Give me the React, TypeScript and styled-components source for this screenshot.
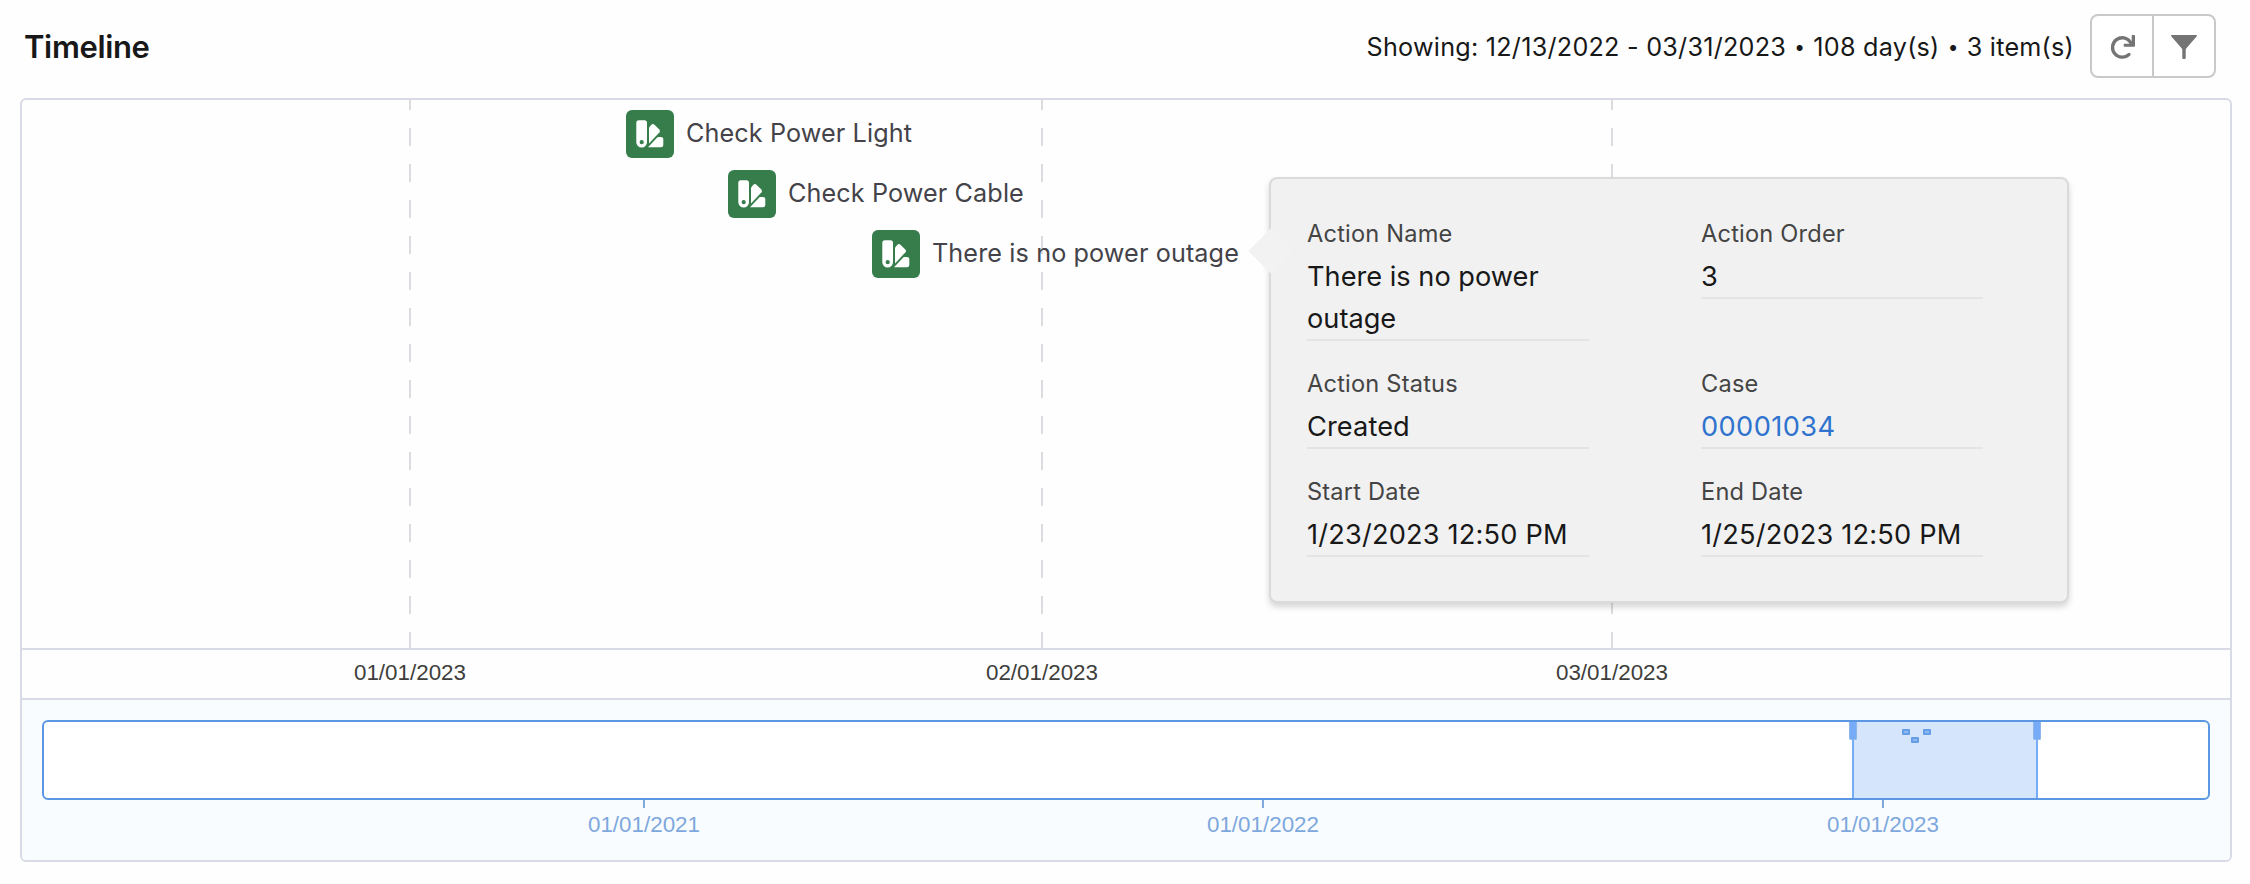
import React from "react";
import styled, { createGlobalStyle } from "styled-components";

const GlobalStyle = createGlobalStyle`
  * { box-sizing: border-box; }
  body {
    margin: 0;
    background: #fff;
    color: #181818;
    font-family: Inter, "Liberation Sans", sans-serif;
  }
`;

const Page = styled.main`
  height: 884px;
  padding: 0 18px 0 20px;
  background: #fefefe;
  overflow: hidden;
`;

const Header = styled.header`
  display: flex;
  align-items: flex-start;
  height: 98px;
  padding: 14px 16px 0 4px;
`;

const Title = styled.h1`
  margin: 0;
  flex: 1;
  font-size: 31px;
  font-weight: 600;
  line-height: 66px;
  letter-spacing: -0.35px;
`;

const Summary = styled.p`
  margin: 0 16px 0 0;
  font-size: 25.2px;
  line-height: 66px;
  letter-spacing: 0.24px;
  white-space: nowrap;
`;

const Dot = styled.span`
  display: inline-block;
  width: 12.5px;
  font-size: 19px;
  line-height: 1;
  text-align: center;
  vertical-align: 2px;
`;

const ButtonGroup = styled.div`
  display: flex;
  width: 126px;
  height: 64px;
  border: 2px solid #c9c9c9;
  border-radius: 8px;
  background: #fff;
`;

const IconButton = styled.button`
  display: flex;
  flex: 1;
  align-items: center;
  justify-content: center;
  padding: 0;
  border: 0;
  background: none;
  color: #747474;

  & + & { border-left: 2px solid #c9c9c9; }
`;

const Panel = styled.section`
  position: relative;
  height: 764px;
  border: 2px solid #d8dbe5;
  border-radius: 6px;
  background: #fefefe;
`;

const Chart = styled.div`
  position: relative;
  height: 548px;
  padding-top: 10px;
`;

const GridLine = styled.i<{ $x: number }>`
  position: absolute;
  top: 0;
  bottom: 0;
  left: ${(p) => p.$x}px;
  width: 2px;
  background: repeating-linear-gradient(
    to bottom, #dddbe0 0 18px, transparent 18px 36px
  ) 0 -8px / 2px 576px no-repeat;
`;

const Item = styled.div<{ $x: number }>`
  position: relative;
  display: flex;
  gap: 12px;
  height: 48px;
  margin: 0 0 12px ${(p) => p.$x}px;
`;

const ItemIcon = styled.span`
  width: 48px;
  height: 48px;
  border-radius: 6px;
  background: #377d4b;
`;

const ItemLabel = styled.span`
  font-size: 25.2px;
  line-height: 47px;
  letter-spacing: 0.11px;
  color: #444349;
`;

const Axis = styled.div`
  position: relative;
  height: 52px;
  border: solid #d8dbe5;
  border-width: 2px 0;
`;

const AxisLabel = styled.span<{ $x: number }>`
  position: absolute;
  left: ${(p) => p.$x}px;
  transform: translateX(-50%);
  font: 22.4px/46px "Liberation Sans", Arial, sans-serif;
  color: #3e3e3c;
`;

const Overview = styled.div`
  height: 160px;
  padding: 20px 20px 0;
  border-radius: 0 0 4px 4px;
  background: #f8fcff;
`;

const Track = styled.div`
  position: relative;
  height: 80px;
  border: 2px solid #5c97e3;
  border-radius: 6px;
  background: #fff;
`;

const Brush = styled.div`
  position: absolute;
  top: 0;
  bottom: 0;
  left: 1808px;
  width: 186px;
  border: solid #75abf7;
  border-width: 0 2px;
  background: #d5e5fc;
`;

const Handle = styled.i<{ $x: number }>`
  position: absolute;
  top: 0;
  left: ${(p) => p.$x}px;
  width: 8px;
  height: 18px;
  border: solid #8fb6ea;
  border-width: 0 1px 1px;
  border-radius: 0 0 2px 2px;
  background: #75abf7;
`;

const Mark = styled.i<{ $x: number; $y: number }>`
  position: absolute;
  left: ${(p) => p.$x}px;
  top: ${(p) => p.$y}px;
  width: 8px;
  height: 6px;
  border: 2px solid #659ee7;
  border-radius: 1px;
  background: #8fbaf0;
`;

const YearScale = styled.div`
  position: relative;
`;

const YearTick = styled.div<{ $x: number }>`
  position: absolute;
  left: ${(p) => p.$x}px;
  display: flex;
  flex-direction: column;
  align-items: center;
  gap: 4px;
  transform: translateX(-50%);
  font: 22.4px/26px "Liberation Sans", Arial, sans-serif;
  color: #7ea8dd;

  &::before {
    content: "";
    width: 2px;
    height: 8px;
    background: #7ea8dd;
  }
`;

const Popover = styled.aside`
  position: absolute;
  left: 1247px;
  top: 77px;
  display: grid;
  grid-template-columns: 282px 282px;
  align-content: start;
  gap: 24px 112px;
  width: 800px;
  height: 426px;
  padding: 36px 0 0 36px;
  border: 2px solid #dadada;
  border-radius: 8px;
  background: #f1f1f1;
  box-shadow: 0 4px 6px rgba(0, 0, 0, 0.16);

  &::before {
    content: "";
    position: absolute;
    left: -16px;
    top: 56px;
    width: 32px;
    height: 32px;
    background: #f2f2f2;
    transform: rotate(45deg);
  }
`;

const Field = styled.div`
  position: relative;
  display: flex;
  flex-direction: column;
  align-self: start;
  gap: 4px;
  padding-top: 1px;
  border-bottom: 2px solid #e4e4e4;
`;

const FieldLabel = styled.span`
  font-size: 23.6px;
  line-height: 36px;
  letter-spacing: 0.2px;
  color: #444;
`;

const FieldValue = styled.span<{ $spacing?: number; $link?: boolean }>`
  margin-bottom: -1px;
  font-size: 27.2px;
  line-height: 42px;
  letter-spacing: ${(p) => p.$spacing ?? 0}px;
  color: ${(p) => (p.$link ? "#2f73cf" : "#181818")};
`;

const RefreshIcon = () => (
  <svg width="28" height="28" viewBox="0 0 28 28" fill="none">
    <path d="M21 22.4A9.7 9.7 0 1 1 22.4 10.2L24 12.6" stroke="currentColor" strokeWidth="3.3" strokeLinecap="round" />
    <path d="M24.5 3h1.7q.8 0 .8.8v10q0 .9-.9.9H16.5q-.8 0-.8-.8v-1.3q0-.8.8-.8h5l2.2-2V3.8q0-.8.8-.8z" fill="currentColor" />
  </svg>
);

const FilterIcon = () => (
  <svg width="28" height="28" viewBox="0 0 28 28" fill="currentColor">
    <path d="M1.6 3h24.8q1 .4.4 1.3L16.4 16.2q-.7.8-.7 1.8v8.1q0 .9-.9.9h-1.6q-.9 0-.9-.9V18q0-1-.7-1.8L1.2 4.3q-.6-.9.4-1.3z" />
  </svg>
);

const SwatchIcon = () => (
  <svg width="48" height="48" viewBox="0 0 48 48" fill="#fff">
    <path fillRule="evenodd" d="M12.8 10.3h5.7a2.5 2.5 0 0 1 2.5 2.5v19.4a5.35 5.35 0 0 1-10.7 0V12.8a2.5 2.5 0 0 1 2.5-2.5zm2.9 19.8a2.1 2.1 0 1 0 0 4.2a2.1 2.1 0 0 0 0-4.2z" />
    <path d="M23 18.6q0-.8.5-1.5l1.9-2.4q1.4-1.4 2.8-.1l5.1 4.8q1.3 1.5.2 2.8L23 33.4z" />
    <path d="M30.3 28.5q1-1.4 2.6-1.4h1.8q2.6 0 2.6 2.4v5.4q0 2.4-2.4 2.4H22z" />
  </svg>
);

const months = [
  { x: 387, label: "01/01/2023" },
  { x: 1019, label: "02/01/2023" },
  { x: 1589, label: "03/01/2023" },
];

const items = [
  { x: 604, name: "Check Power Light" },
  { x: 706, name: "Check Power Cable" },
  { x: 850, name: "There is no power outage" },
];

const years = [
  { x: 602, label: "01/01/2021" },
  { x: 1221, label: "01/01/2022" },
  { x: 1841, label: "01/01/2023" },
];

const fields = [
  { label: "Action Name", value: "There is no power outage" },
  { label: "Action Order", value: "3" },
  { label: "Action Status", value: "Created", spacing: 0.1 },
  { label: "Case", value: "00001034", spacing: 0.4, link: true },
  { label: "Start Date", value: "1/23/2023 12:50 PM", spacing: 0.18 },
  { label: "End Date", value: "1/25/2023 12:50 PM", spacing: 0.18 },
];

export default function App() {
  return (
    <Page>
      <GlobalStyle />
      <Header>
        <Title>Timeline</Title>
        <Summary>
          Showing: 12/13/2022 - 03/31/2023 <Dot>•</Dot> 108 day(s) <Dot>•</Dot> 3 item(s)
        </Summary>
        <ButtonGroup>
          <IconButton aria-label="Refresh"><RefreshIcon /></IconButton>
          <IconButton aria-label="Filter"><FilterIcon /></IconButton>
        </ButtonGroup>
      </Header>
      <Panel>
        <Chart>
          {months.map((m) => <GridLine key={m.label} $x={m.x} />)}
          {items.map((item) => (
            <Item key={item.name} $x={item.x}>
              <ItemIcon><SwatchIcon /></ItemIcon>
              <ItemLabel>{item.name}</ItemLabel>
            </Item>
          ))}
        </Chart>
        <Axis>
          {months.map((m) => <AxisLabel key={m.label} $x={m.x + 1}>{m.label}</AxisLabel>)}
        </Axis>
        <Overview>
          <Track>
            <Brush />
            <Handle $x={1805} />
            <Handle $x={1989} />
            <Mark $x={1858} $y={7} />
            <Mark $x={1867} $y={15} />
            <Mark $x={1879} $y={7} />
          </Track>
          <YearScale>
            {years.map((y) => <YearTick key={y.label} $x={y.x}>{y.label}</YearTick>)}
          </YearScale>
        </Overview>
        <Popover>
          {fields.map((f) => (
            <Field key={f.label}>
              <FieldLabel>{f.label}</FieldLabel>
              <FieldValue $spacing={f.spacing} $link={f.link}>{f.value}</FieldValue>
            </Field>
          ))}
        </Popover>
      </Panel>
    </Page>
  );
}
